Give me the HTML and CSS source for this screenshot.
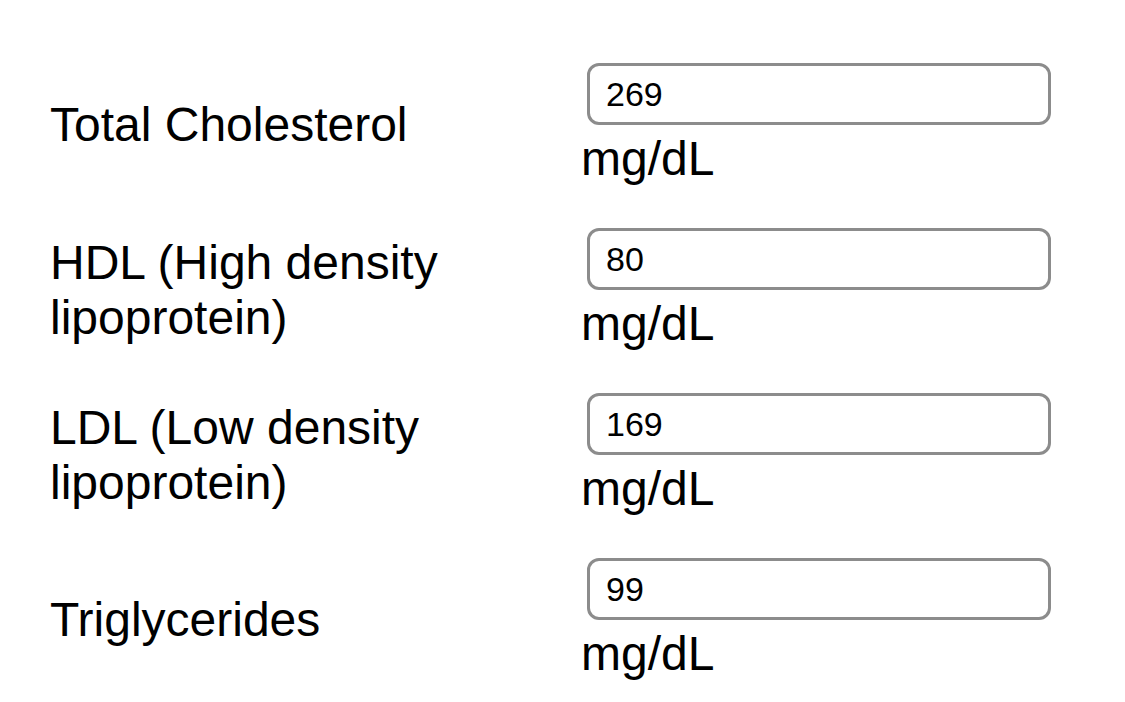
FILE: index.html
```html
<!DOCTYPE html>
<html lang="en">
<head>
<meta charset="utf-8">
<title>Cholesterol</title>
<link rel="stylesheet" href="styles.css">
</head>
<body>
<div class="form">
  <div class="label">Total Cholesterol</div>
  <div class="field"><input class="input" type="text" value="269"><div class="unit">mg/dL</div></div>
  <div class="label">HDL (High density lipoprotein)</div>
  <div class="field"><input class="input" type="text" value="80"><div class="unit">mg/dL</div></div>
  <div class="label">LDL (Low density lipoprotein)</div>
  <div class="field"><input class="input" type="text" value="169"><div class="unit">mg/dL</div></div>
  <div class="label">Triglycerides</div>
  <div class="field"><input class="input" type="text" value="99"><div class="unit">mg/dL</div></div>
</div>
</body>
</html>
```

FILE: styles.css
```css
html, body {
  margin: 0;
  padding: 0;
  background: #ffffff;
}
body {
  font-family: "Liberation Sans", Arial, sans-serif;
  color: #000000;
}
.form {
  display: grid;
  grid-template-columns: 531px 470px;
  row-gap: 42px;
  padding: 63px 0 0 50px;
  align-items: center;
}
.label {
  font-size: 48px;
  line-height: 55px;
}
.field {
  display: flex;
  flex-direction: column;
  align-items: flex-start;
}
.input {
  box-sizing: border-box;
  width: 464px;
  height: 62px;
  margin: 0 0 6px 6px;
  padding: 0 0 0 16px;
  border: 3px solid #8c8c8c;
  border-radius: 12px;
  background: #ffffff;
  font-family: "Liberation Sans", Arial, sans-serif;
  font-size: 34px;
  color: #000000;
  outline: none;
}
.unit {
  font-size: 48px;
  line-height: 55px;
}
```
